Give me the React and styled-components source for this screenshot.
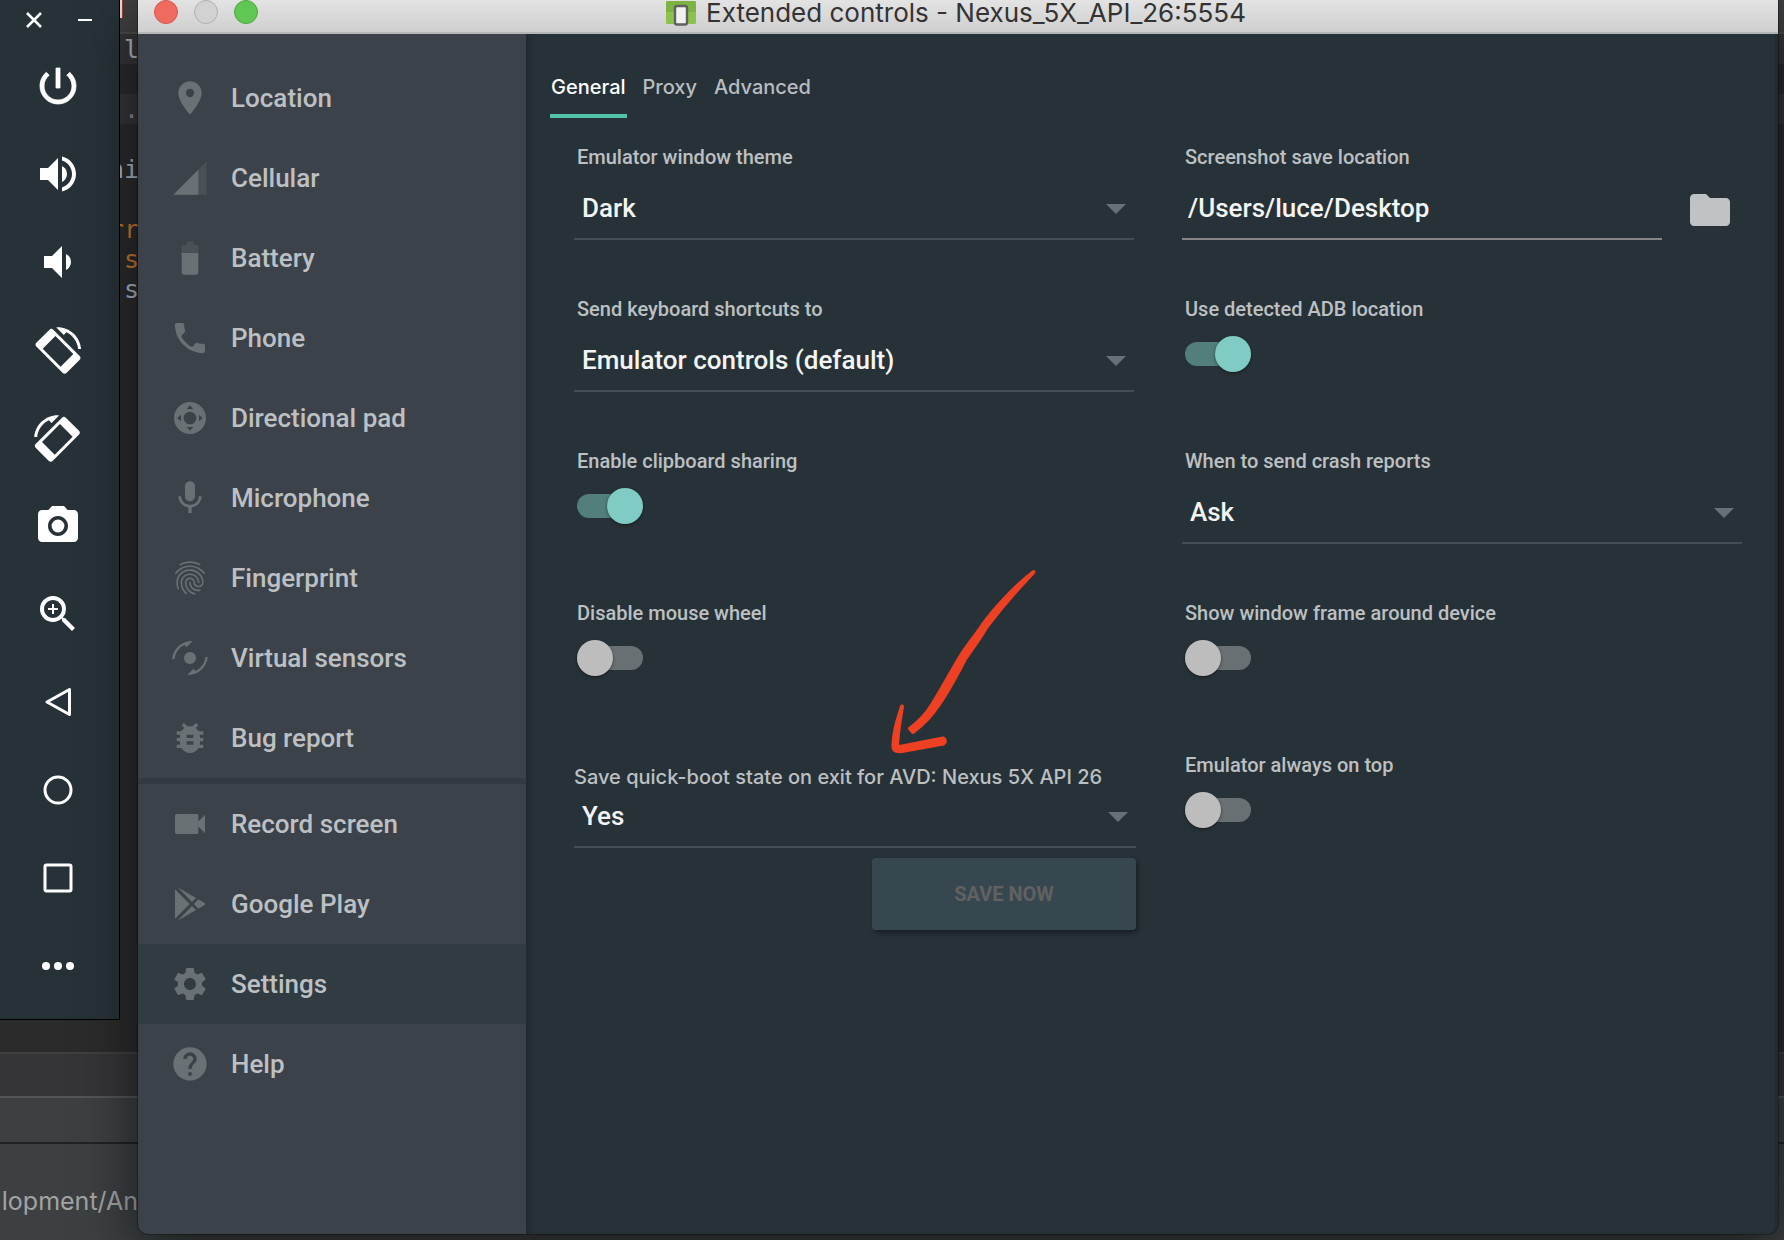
import React from "react";
import styled, { createGlobalStyle } from "styled-components";
import {
  MdVolumeUp,
  MdVolumeDown,
  MdCameraAlt,
  MdZoomIn,
  MdLocationOn,
  MdPhone,
  MdMic,
  MdFingerprint,
  MdBugReport,
  MdVideocam,
  MdSettings,
  MdHelp,
  MdFolder,
} from "react-icons/md";

const ROBOTO = `Roboto, "Liberation Sans", sans-serif`;
const SYSTEM = `Inter, Roboto, "Liberation Sans", sans-serif`;

const GlobalStyle = createGlobalStyle`
  *, *::before, *::after { box-sizing: border-box; }
  body {
    margin: 0;
    background: #3c4042;
    font-family: ${ROBOTO};
    overflow: hidden;
  }
  button, input, select { font: inherit; color: inherit; }
`;

/* ---------- Desktop ---------- */

const Desktop = styled.div`
  display: grid;
  grid-template: minmax(100vh, auto) / minmax(0, 1fr);
  & > * { grid-area: 1 / 1; }
`;

const Ide = styled.div`
  display: flex;
  flex-direction: column;
  overflow: hidden;
`;

const IdeToolbar = styled.div`
  display: flex;
  height: 34px;
  padding-left: 120px;
  background: #404042;
  border-bottom: 2px solid #4a4a4a;
`;

const IdeToolbarMark = styled.span`
  width: 3px;
  height: 18px;
  background: #e8e4e0;
  border-right: 1px solid #a04030;
`;

const Code = styled.pre`
  flex: 1;
  margin: 0;
  background: #2b2b2b;
  font: 25px/32px "DejaVu Sans Mono", "Liberation Mono", monospace;
  color: #a9b7c6;
`;

const CodeLine = styled.div`
  height: 30px;
  padding-left: 109px;
  background: ${(p) => (p.$lit ? "#353535" : "transparent")};
  color: ${(p) => p.$color || "inherit"};
`;

const IdeBand = styled.div`
  height: ${(p) => p.$height}px;
  background: ${(p) => p.$bg};
  border-top: 2px solid ${(p) => p.$line};
`;

const IdeStatus = styled.div`
  display: flex;
  align-items: center;
  justify-content: flex-end;
  width: 138px;
  height: 96px;
  padding-top: 18px;
  white-space: nowrap;
  font: 25px/30px ${SYSTEM};
  color: #a3a3a3;
`;

const IdeFooter = styled.div`
  background: #3c4042;
  border-top: 2px solid #222;
`;

const Windows = styled.div`
  display: flex;
  align-items: flex-start;
  gap: 18px;
  padding-right: 6px;
`;

/* ---------- Emulator toolbar ---------- */

const EmulatorBar = styled.aside`
  flex: none;
  width: 120px;
  padding-bottom: 9px;
  display: flex;
  flex-direction: column;
  background: #273238;
  border: solid #000;
  border-width: 0 1px 1px 0;
  color: #fff;
`;

const BarTop = styled.div`
  display: flex;
  justify-content: space-between;
  height: 42px;
  padding: 8px 22px;
`;

const BareButton = styled.button`
  display: flex;
  align-items: center;
  justify-content: center;
  padding: 0;
  border: 0;
  background: none;
  cursor: pointer;
`;

const BarTopButton = styled(BareButton)`
  width: 24px;
  height: 24px;
`;

const BarButton = styled(BareButton)`
  height: 88px;
  padding-right: 3px;
  svg { width: 48px; height: 48px; }
`;

/* ---------- Extended controls window ---------- */

const Window = styled.section`
  flex: 1;
  min-width: 0;
  min-height: calc(100vh - 6px);
  display: flex;
  flex-direction: column;
  border-radius: 0 0 10px 10px;
  background: #273238;
  box-shadow: 0 0 0 1px rgba(0, 0, 0, 0.3), 0 16px 60px rgba(0, 0, 0, 0.6);
`;

const TitleBar = styled.header`
  display: grid;
  grid-template-columns: 120px 1fr 120px;
  height: 34px;
  padding: 0 20px 0 16px;
  background: linear-gradient(#e3e3e3, #cfcfcf);
  border-bottom: 2px solid #b4b6b6;
`;

const Lights = styled.div`
  display: flex;
  gap: 16px;
`;

const Light = styled.button`
  width: 24px;
  height: 24px;
  flex: none;
  padding: 0;
  border-radius: 50%;
  border: 1px solid ${(p) => p.$edge};
  background: ${(p) => p.$fill};
`;

const Title = styled.h1`
  display: flex;
  justify-content: center;
  gap: 10px;
  margin: 0;
  font: 400 26px/26px ${SYSTEM};
  color: #333;
  white-space: nowrap;
`;

const Body = styled.div`
  flex: 1;
  display: flex;
`;

const Sidebar = styled.nav`
  flex: none;
  width: 388px;
  padding-top: 24px;
  border-bottom-left-radius: 10px;
  background: #3b4249;
`;

const NavList = styled.ul`
  margin: 0;
  padding: 0;
  list-style: none;
  & + & {
    border-top: 6px solid #313a41;
  }
`;

const NavButton = styled(BareButton)`
  width: 100%;
  height: 80px;
  padding-left: 32px;
  gap: 21px;
  justify-content: flex-start;
  font-size: 26px;
  font-weight: 500;
  line-height: 32px;
  color: #bdc0c3;
  background: ${(p) => (p.$active ? "#313b42" : "none")};
  svg { width: 40px; height: 40px; flex: none; color: #697174; }
`;

const Main = styled.main`
  position: relative;
  flex: 1;
  min-width: 0;
  padding: 22px 33px 0 24px;
  border-right: 3px solid #212b31;
  border-bottom-right-radius: 10px;
  box-shadow: inset 8px 0 8px -6px #1d262c;
`;

const Tabs = styled.div`
  display: flex;
  gap: 15px;
  margin-bottom: 26px;
`;

const Tab = styled(BareButton)`
  height: 62px;
  padding: 4px 1px 0;
  font: 500 20px/24px ${SYSTEM};
  color: ${(p) => (p.$active ? "#fff" : "#b9bdc0")};
  border-bottom: 4px solid ${(p) => (p.$active ? "#54c2a8" : "transparent")};
`;

const Form = styled.form`
  display: grid;
  grid-template-columns: minmax(0, 1fr) minmax(0, 1fr);
  grid-auto-rows: minmax(152px, auto);
  column-gap: 48px;
  padding-left: 24px;
`;

const Field = styled.div`
  display: flex;
  flex-direction: column;
  gap: 6px;
`;

const Label = styled.label`
  padding-left: 3px;
  font-size: 20px;
  font-weight: 500;
  line-height: 26px;
  color: #bdc0c2;
`;

const BootField = styled(Field)`
  padding-top: 12px;
  margin-right: -2px;
  gap: 0;
`;

const BootLabel = styled(Label)`
  padding-left: 0;
  font: 500 20px/26px ${SYSTEM};
  white-space: nowrap;
`;

const SelectBox = styled.div`
  position: relative;
  &::after {
    content: "";
    position: absolute;
    right: 8px;
    bottom: 26px;
    border: solid transparent;
    border-width: 10px 10px 0;
    border-top-color: #687077;
    pointer-events: none;
  }
`;

const Select = styled.select`
  appearance: none;
  display: block;
  width: 100%;
  height: ${(p) => (p.$compact ? 58 : 64)}px;
  padding: ${(p) => (p.$compact ? "0 32px 4px 8px" : "2px 32px 0 8px")};
  border: 0;
  border-bottom: 2px solid #434d53;
  border-radius: 0;
  background: none;
  font-size: 26px;
  font-weight: 500;
  color: #f3f4f4;
`;

const PathRow = styled.div`
  display: flex;
  align-items: center;
  gap: 24px;
  padding-right: 8px;
`;

const PathInput = styled.input`
  flex: 1;
  min-width: 0;
  height: 64px;
  padding: 2px 0 0 6px;
  border: 0;
  border-bottom: 2px solid #868584;
  border-radius: 0;
  background: none;
  font-size: 26px;
  font-weight: 500;
  color: #f3f4f4;
`;

const FolderButton = styled(BareButton)`
  padding-top: 4px;
  color: #bfc3c6;
  svg { width: 48px; height: 48px; }
`;

const Switch = styled.input.attrs({ type: "checkbox" })`
  appearance: none;
  display: grid;
  align-items: center;
  width: 66px;
  height: 36px;
  margin: 8px 0 0 3px;
  cursor: pointer;
  &::before, &::after {
    content: "";
    grid-area: 1 / 1;
  }
  &::before {
    height: 24px;
    border-radius: 12px;
    background: #687073;
  }
  &::after {
    width: 36px;
    height: 36px;
    border-radius: 50%;
    background: #bdbdbd;
    box-shadow: 0 1px 3px rgba(0, 0, 0, 0.5);
  }
  &:checked::before { background: #527e7b; }
  &:checked::after { background: #80cbc4; justify-self: end; }
`;

const SaveButton = styled.button`
  align-self: flex-end;
  width: 264px;
  height: 72px;
  margin-top: 10px;
  border: 0;
  border-radius: 4px;
  background: #37474f;
  box-shadow: 2px 3px 5px rgba(0, 0, 0, 0.4);
  font-size: 20px;
  font-weight: 700;
  color: #616161;
`;

const Annotation = styled.svg`
  position: absolute;
  left: 359px;
  top: 531px;
  width: 155px;
  height: 195px;
  pointer-events: none;
`;

/* ---------- Drawings ---------- */

const ARC =
  "M16.48 2.52c3.27 1.55 5.61 4.72 5.97 8.48h1.5C23.44 4.84 18.29 0 12 0l-.66.03 3.81 3.81 1.33-1.32z";

const Power = () => (
  <svg viewBox="0 0 24 24" fill="currentColor" stroke="currentColor" strokeWidth=".4" aria-hidden="true">
    <path d="M13 3h-2v10h2V3zm4.830 2.170l-1.420 1.420C17.990 7.860 19 9.810 19 12c0 3.870-3.130 7-7 7s-7-3.130-7-7c0-2.190 1.010-4.140 2.580-5.420L6.170 5.170C4.230 6.820 3 9.260 3 12c0 4.970 4.030 9 9 9s9-4.030 9-9c0-2.740-1.230-5.180-3.170-6.830z" />
  </svg>
);

const RotatePhone = ({ flip }) => (
  <svg viewBox="0 0 144 144" fill="currentColor" aria-hidden="true">
    <g transform={flip ? "translate(142 0) scale(-1 1)" : undefined}>
      <path
        transform="rotate(45 72 76)"
        fillRule="evenodd"
        d="M17 40H127a9 9 0 0 1 9 9V103a9 9 0 0 1-9 9H17a9 9 0 0 1-9-9V49a9 9 0 0 1 9-9zM34 49V103H110V49z"
      />
      <path transform="translate(0 4) scale(5.9)" d={ARC} />
    </g>
  </svg>
);

const Outline = ({ children }) => (
  <svg viewBox="0 0 48 48" fill="none" stroke="currentColor" strokeWidth="3" aria-hidden="true">
    {children}
  </svg>
);

const Back = () => (
  <Outline><path d="M35.500 11.500V36.500L13 24z" strokeLinejoin="round" /></Outline>
);
const Home = () => (
  <Outline><circle cx="24" cy="24" r="13" /></Outline>
);
const Overview = () => (
  <Outline><rect x="11" y="11" width="26" height="26" rx="1.500" /></Outline>
);
const More = () => (
  <svg viewBox="0 0 48 48" fill="currentColor" aria-hidden="true">
    <circle cx="12" cy="24" r="4" />
    <circle cx="24" cy="24" r="4" />
    <circle cx="36" cy="24" r="4" />
  </svg>
);

const Cellular = () => (
  <svg viewBox="0 0 24 24" fill="currentColor" aria-hidden="true">
    <path fillOpacity=".3" d="M2 22h20V2z" />
    <path d="M17 7L2 22h15z" />
  </svg>
);

const Battery = () => (
  <svg viewBox="0 0 24 24" fill="currentColor" aria-hidden="true">
    <path fillOpacity=".3" d="M17 5.330C17 4.600 16.400 4 15.670 4H14V2h-4v2H8.330C7.600 4 7 4.600 7 5.330V9h10V5.330z" />
    <path d="M7 9v11.670C7 21.400 7.600 22 8.330 22h7.330c.74 0 1.340-.6 1.340-1.330V9H7z" />
  </svg>
);

const Dpad = () => (
  <svg viewBox="0 0 120 120" fill="currentColor" aria-hidden="true">
    <path
      fillRule="evenodd"
      d="M60 12a48 48 0 1 1 0 96a48 48 0 1 1 0-96zM60 41a19 19 0 1 0 0 38a19 19 0 1 0 0-38zM60 22L50 33H70zM60 98L50 87H70zM22 60L33 50V70zM98 60L87 50V70z"
    />
  </svg>
);

const Sensors = () => (
  <svg viewBox="0 0 120 120" fill="currentColor" aria-hidden="true">
    <circle cx="60" cy="60" r="18" />
    <path transform="translate(124 9) scale(-4.900 4.900)" d={ARC} />
    <path transform="translate(-4 111) scale(4.900 -4.900)" d={ARC} />
  </svg>
);

const Play = () => (
  <svg viewBox="0 0 120 120" fill="currentColor" aria-hidden="true">
    <path d="M15 16L59 60L15 104zM23 10L78 42L66 54zM23 110L78 78L66 66zM85 46L104 57Q107 60 104 63L85 74L71 60z" />
  </svg>
);

const AppIcon = () => (
  <svg width="30" height="26" viewBox="0 0 30 26" aria-hidden="true">
    <rect y="1" width="30" height="23" rx="1.500" fill="#8bc34a" />
    <path d="M0 2.500Q0 1 1.500 1H28.500Q30 1 30 2.500V12H0z" fill="#7cb342" />
    <rect x="9" y="6" width="12" height="18.500" rx="2" fill="#f1f1f1" stroke="#616161" strokeWidth="2.400" />
  </svg>
);

const HandArrow = () => (
  <Annotation viewBox="885 565 155 195" fill="#ee4023" stroke="#ee4023" strokeLinejoin="round" strokeLinecap="round" aria-hidden="true">
    <path
      strokeWidth="4"
      d="M1033.500 572C1023 583 1000 609 986 627.500C979 640 971 650 965 659C956 676 948 692 937 707C930 718 922 725 913 732L910 728.500C919 722 926 715 932 705C944 686 952 670 961 655.500C967 646 976 635 982 626C996 606 1019 583 1033.500 572z"
    />
    <path
      strokeWidth="4"
      d="M902 706.500C900 720 897.500 730 897 747.500L943 738.500Q946.500 741 943.500 743.500L902 751C894 752 893 749 893.500 744C894.500 726 898.500 718 902 706.500z"
    />
  </Annotation>
);

/* ---------- Data ---------- */

const emulatorButtons = [
  ["Power", <Power />],
  ["Volume up", <MdVolumeUp />],
  ["Volume down", <MdVolumeDown />],
  ["Rotate left", <RotatePhone />],
  ["Rotate right", <RotatePhone flip />],
  ["Take screenshot", <MdCameraAlt />],
  ["Zoom mode", <MdZoomIn />],
  ["Back", <Back />],
  ["Home", <Home />],
  ["Overview", <Overview />],
  ["More", <More />],
];

const navGroups = [
  [
    ["Location", <MdLocationOn />],
    ["Cellular", <Cellular />],
    ["Battery", <Battery />],
    ["Phone", <MdPhone />],
    ["Directional pad", <Dpad />],
    ["Microphone", <MdMic />],
    ["Fingerprint", <MdFingerprint />],
    ["Virtual sensors", <Sensors />],
    ["Bug report", <MdBugReport />],
  ],
  [
    ["Record screen", <MdVideocam />],
    ["Google Play", <Play />],
    ["Settings", <MdSettings />],
    ["Help", <MdHelp />],
  ],
];

const codeLines = [
  { text: " l", lit: true },
  { text: "" },
  { text: " .", lit: true, color: "#8c8c8c" },
  { text: "" },
  { text: "ni" },
  { text: "" },
  { text: "rr", color: "#cc7832" },
  { text: " s", color: "#cc7832" },
  { text: " s" },
];

const SelectField = ({ id, label, value }) => (
  <Field>
    <Label htmlFor={id}>{label}</Label>
    <SelectBox>
      <Select id={id} defaultValue={value}>
        <option>{value}</option>
      </Select>
    </SelectBox>
  </Field>
);

const SwitchField = ({ id, label, on }) => (
  <Field>
    <Label htmlFor={id}>{label}</Label>
    <Switch id={id} defaultChecked={on} />
  </Field>
);

export default function App() {
  return (
    <>
      <GlobalStyle />
      <Desktop>
        <Ide>
          <IdeToolbar><IdeToolbarMark /></IdeToolbar>
          <Code>
            {codeLines.map((line, i) => (
              <CodeLine key={i} $lit={line.lit} $color={line.color}>{line.text}</CodeLine>
            ))}
          </Code>
          <IdeBand $height={44} $bg="#353537" $line="#3f3f3f" />
          <IdeBand $height={46} $bg="#3c4042" $line="#555" />
          <IdeFooter><IdeStatus>lopment/An</IdeStatus></IdeFooter>
        </Ide>

        <Windows>
          <EmulatorBar>
            <BarTop>
              <BarTopButton aria-label="Close">
                <svg width="24" height="24" viewBox="0 0 24 24" stroke="currentColor" strokeWidth="2.500">
                  <path d="M5 5L19 19M19 5L5 19" />
                </svg>
              </BarTopButton>
              <BarTopButton aria-label="Minimize">
                <svg width="24" height="24" viewBox="0 0 24 24" fill="currentColor">
                  <path d="M5 11H19V13H5z" />
                </svg>
              </BarTopButton>
            </BarTop>
            {emulatorButtons.map(([name, icon]) => (
              <BarButton key={name} aria-label={name}>{icon}</BarButton>
            ))}
          </EmulatorBar>

          <Window>
            <TitleBar>
              <Lights>
                <Light aria-label="Close window" $fill="#f06b5f" $edge="#d9534a" />
                <Light aria-label="Minimize window" $fill="#d2d2d2" $edge="#b0b0b0" />
                <Light aria-label="Zoom window" $fill="#60c654" $edge="#4aa83e" />
              </Lights>
              <Title><AppIcon />Extended controls - Nexus_5X_API_26:5554</Title>
            </TitleBar>

            <Body>
              <Sidebar>
                {navGroups.map((group, i) => (
                  <NavList key={i}>
                    {group.map(([name, icon]) => (
                      <li key={name}>
                        <NavButton $active={name === "Settings"}>{icon}{name}</NavButton>
                      </li>
                    ))}
                  </NavList>
                ))}
              </Sidebar>

              <Main>
                <Tabs role="tablist">
                  <Tab role="tab" aria-selected="true" $active>General</Tab>
                  <Tab role="tab" aria-selected="false">Proxy</Tab>
                  <Tab role="tab" aria-selected="false">Advanced</Tab>
                </Tabs>

                <Form onSubmit={(e) => e.preventDefault()}>
                  <SelectField id="theme" label="Emulator window theme" value="Dark" />
                  <Field>
                    <Label htmlFor="path">Screenshot save location</Label>
                    <PathRow>
                      <PathInput id="path" type="text" defaultValue="/Users/luce/Desktop" />
                      <FolderButton type="button" aria-label="Choose folder"><MdFolder /></FolderButton>
                    </PathRow>
                  </Field>

                  <SelectField id="keys" label="Send keyboard shortcuts to" value="Emulator controls (default)" />
                  <SwitchField id="adb" label="Use detected ADB location" on />

                  <SwitchField id="clipboard" label="Enable clipboard sharing" on />
                  <SelectField id="crash" label="When to send crash reports" value="Ask" />

                  <SwitchField id="wheel" label="Disable mouse wheel" />
                  <SwitchField id="frame" label="Show window frame around device" />

                  <BootField>
                    <BootLabel htmlFor="boot">Save quick-boot state on exit for AVD: Nexus 5X API 26</BootLabel>
                    <SelectBox>
                      <Select id="boot" defaultValue="Yes" $compact>
                        <option>Yes</option>
                        <option>No</option>
                      </Select>
                    </SelectBox>
                    <SaveButton type="button" disabled>SAVE NOW</SaveButton>
                  </BootField>
                  <SwitchField id="top" label="Emulator always on top" />
                </Form>

                <HandArrow />
              </Main>
            </Body>
          </Window>
        </Windows>
      </Desktop>
    </>
  );
}
